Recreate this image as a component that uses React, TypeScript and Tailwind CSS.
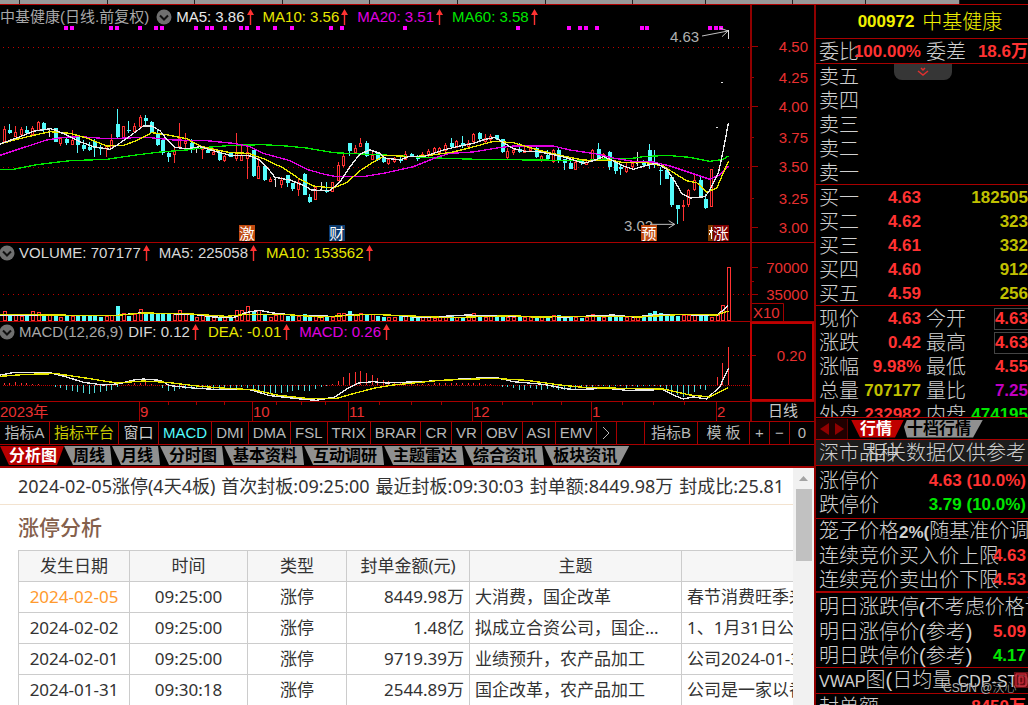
import React, { useState } from 'react';
import clsx from 'clsx';

type Point = [number, number];
// kind, high, body top, body bottom, low
type Candle = ['r' | 'c' | 'w', number, number, number, number];

interface Reading {
  label: string;
  color: string;
}

// Plot coordinates are thirds of a pixel
const candles: Candle[] = [
  ['r', 378, 387, 425, 425], ['c', 372, 390, 398, 402], ['r', 378, 398, 410, 410], ['r', 380, 387, 402, 407],
  ['c', 378, 390, 398, 405], ['r', 378, 385, 402, 405], ['r', 362, 368, 392, 392], ['c', 366, 368, 388, 400],
  ['w', 384, 388, 388, 412], ['c', 384, 384, 426, 426], ['r', 412, 414, 430, 438], ['c', 410, 418, 430, 436],
  ['r', 390, 420, 432, 436], ['c', 406, 408, 434, 458], ['c', 420, 434, 448, 454], ['c', 426, 442, 450, 454],
  ['c', 418, 424, 444, 472], ['c', 434, 440, 446, 464], ['r', 436, 440, 446, 470], ['r', 402, 420, 446, 446],
  ['c', 326, 372, 412, 416], ['r', 378, 380, 414, 416], ['c', 362, 390, 392, 400], ['r', 368, 380, 394, 396],
  ['r', 346, 352, 380, 382], ['c', 346, 354, 362, 374], ['c', 364, 366, 398, 398], ['c', 388, 400, 434, 438],
  ['c', 418, 420, 460, 464], ['c', 456, 458, 470, 486], ['r', 444, 454, 462, 490], ['r', 368, 414, 440, 444],
  ['r', 398, 424, 430, 444], ['c', 416, 430, 446, 460], ['w', 440, 444, 450, 460], ['r', 440, 444, 446, 476],
  ['c', 440, 450, 458, 460], ['r', 444, 458, 464, 466], ['c', 454, 458, 480, 484], ['r', 464, 468, 482, 486],
  ['c', 456, 460, 470, 472], ['r', 398, 456, 476, 482], ['r', 436, 466, 482, 484], ['r', 440, 456, 476, 536],
  ['c', 450, 450, 528, 530], ['r', 470, 500, 534, 536], ['c', 498, 498, 540, 544], ['r', 530, 538, 544, 546],
  ['w', 530, 536, 548, 560], ['r', 530, 542, 554, 564], ['c', 524, 526, 548, 560], ['c', 548, 550, 566, 572],
  ['r', 534, 548, 568, 588], ['c', 520, 522, 584, 584], ['c', 582, 592, 606, 610], ['r', 560, 562, 598, 600],
  ['w', 546, 566, 566, 574], ['c', 546, 572, 572, 578], ['r', 546, 548, 574, 576], ['r', 486, 496, 540, 542],
  ['r', 460, 468, 496, 500], ['c', 428, 430, 454, 468], ['r', 434, 444, 458, 462], ['r', 414, 430, 438, 442],
  ['c', 424, 428, 468, 472], ['r', 456, 466, 478, 480], ['c', 458, 460, 480, 484], ['c', 466, 470, 486, 490],
  ['r', 474, 478, 490, 494], ['r', 472, 476, 484, 488], ['c', 466, 476, 484, 488], ['r', 454, 462, 478, 480],
  ['c', 458, 462, 468, 472], ['c', 466, 470, 476, 484], ['r', 456, 462, 470, 472], ['r', 446, 454, 466, 470],
  ['r', 442, 446, 458, 462], ['r', 440, 444, 458, 464], ['r', 430, 436, 450, 456], ['c', 414, 428, 440, 446],
  ['r', 420, 424, 442, 444], ['c', 408, 430, 436, 444], ['r', 420, 430, 440, 446], ['r', 400, 404, 424, 428],
  ['c', 396, 398, 418, 422], ['r', 402, 416, 424, 432], ['r', 402, 408, 418, 424], ['c', 404, 404, 418, 420],
  ['c', 416, 418, 456, 460], ['r', 444, 454, 472, 478], ['r', 446, 450, 456, 466], ['c', 428, 446, 456, 460],
  ['r', 440, 450, 456, 460], ['r', 440, 444, 452, 456], ['c', 440, 444, 472, 474], ['r', 466, 470, 478, 486],
  ['c', 450, 464, 476, 480], ['r', 446, 450, 484, 488], ['c', 444, 450, 484, 488], ['c', 476, 478, 490, 510],
  ['c', 480, 490, 506, 508], ['r', 484, 486, 508, 510], ['c', 478, 480, 488, 494], ['r', 478, 486, 492, 494],
  ['r', 446, 450, 478, 482], ['c', 430, 446, 476, 482], ['r', 460, 464, 474, 478], ['c', 454, 456, 500, 510],
  ['c', 482, 484, 514, 522], ['c', 494, 500, 506, 524], ['r', 490, 502, 514, 518], ['r', 488, 490, 500, 504],
  ['w', 456, 490, 490, 498], ['c', 480, 488, 494, 500], ['c', 432, 450, 492, 508], ['c', 450, 490, 494, 504],
  ['c', 500, 510, 514, 554], ['c', 506, 510, 536, 538], ['c', 530, 532, 614, 622], ['c', 614, 616, 626, 672],
  ['r', 600, 616, 620, 662], ['r', 566, 572, 612, 620], ['r', 524, 540, 568, 572], ['c', 526, 540, 590, 592],
  ['c', 582, 596, 624, 626], ['r', 506, 508, 620, 622], ['w', 380, 380, 380, 380], ['w', 245, 245, 245, 245],
  ['w', 90, 90, 90, 118],
];

const volumes = [
  258, 272, 272, 274, 274, 258, 262, 272, 270, 266, 276, 272, 274, 274, 272, 272, 274, 276, 274, 270, 243, 266, 272,
  268, 252, 264, 262, 264, 264, 266, 268, 256, 264, 266, 276, 272, 276, 276, 276, 278, 280, 255, 257, 243, 262, 256,
  266, 278, 270, 268, 272, 274, 274, 266, 272, 274, 272, 276, 278, 264, 264, 258, 268, 266, 266, 268, 272, 276, 278,
  276, 274, 272, 276, 278, 276, 278, 280, 278, 276, 270, 276, 278, 274, 266, 272, 276, 274, 272, 272, 276, 278, 276,
  278, 276, 274, 278, 278, 270, 270, 274, 276, 276, 278, 278, 268, 274, 278, 270, 272, 276, 278, 276, 276, 276, 263,
  258, 264, 268, 270, 272, 270, 272, 270, 272, 272, 276, 272, 240, 128,
];

const macdBars = [
  8, 8, 9, 6, 6, 4, 5, 2, 1, -4, -8, -14, -17, -20, -24, -26, -22, -20, -17, -13, -6, 1, 5, 6, 8, 10, 5, 2, -8, -17,
  -18, -12, -10, -10, -12, -12, -12, -12, -14, -14, -14, -8, -6, -8, -14, -18, -20, -22, -24, -22, -20, -16, -14, -17,
  -18, -12, -6, -2, 3, 12, 24, 36, 40, 44, 38, 30, 22, 16, 12, 10, 8, 6, 5, 4, 5, 5, 6, 6, 6, 7, 7, 6, 6, 6, 6, 4, 3,
  2, -4, -6, -8, -13, -13, -8, -10, -13, -10, -9, -13, -13, -14, -12, -8, -8, -4, -3, -3, -4, -3, -3, -7, -3, -4, -2,
  -2, -2, -4, -12, -26, -30, -34, -28, -20, -12, -14, 0, 26, 68, 114,
];

const ma5: Point[] = [
  [0, 432], [50, 414], [100, 394], [150, 386], [165, 390], [200, 405], [240, 425], [280, 440], [330, 448], [350, 436],
  [390, 408], [430, 378], [455, 378], [480, 392], [500, 418], [525, 442], [560, 446], [600, 440], [640, 452],
  [690, 466], [745, 466], [775, 478], [800, 500], [825, 532], [870, 540], [910, 556], [935, 570], [990, 572],
  [1020, 545], [1050, 500], [1080, 462], [1110, 450], [1140, 460], [1155, 474], [1200, 480], [1225, 470], [1270, 470],
  [1330, 450], [1370, 440], [1420, 430], [1455, 418], [1485, 412], [1510, 428], [1540, 446], [1575, 454], [1610, 454],
  [1660, 464], [1695, 472], [1750, 490], [1780, 482], [1810, 470], [1835, 480], [1870, 498], [1900, 508], [1940, 496],
  [1970, 490], [2000, 508], [2025, 545], [2045, 580], [2070, 594], [2115, 590], [2130, 570], [2155, 520], [2170, 450],
  [2185, 370],
];
const ma10: Point[] = [
  [0, 432], [50, 418], [110, 404], [150, 395], [210, 400], [260, 414], [320, 438], [370, 436], [410, 422], [455, 398],
  [500, 404], [560, 416], [600, 438], [640, 448], [690, 458], [745, 460], [790, 476], [850, 504], [900, 538],
  [940, 558], [1000, 564], [1040, 548], [1080, 512], [1120, 486], [1155, 466], [1240, 470], [1290, 466], [1360, 456],
  [1430, 438], [1480, 424], [1540, 428], [1580, 440], [1630, 454], [1690, 468], [1750, 480], [1790, 482], [1830, 480],
  [1870, 488], [1940, 488], [1990, 498], [2030, 524], [2060, 542], [2090, 548], [2120, 576], [2150, 565], [2185, 484],
];
const ma20: Point[] = [
  [0, 466], [60, 446], [140, 420], [190, 412], [240, 410], [320, 416], [440, 412], [520, 420], [620, 422], [700, 430],
  [750, 440], [790, 460], [870, 482], [920, 508], [970, 522], [1010, 530], [1090, 530], [1160, 518], [1240, 500],
  [1310, 472], [1350, 460], [1420, 456], [1490, 444], [1540, 438], [1660, 438], [1710, 450], [1790, 462], [1840, 474],
  [1900, 484], [1960, 486], [2010, 498], [2070, 518], [2130, 538], [2160, 524], [2185, 498],
];
const ma60: Point[] = [
  [0, 508], [40, 508], [110, 494], [210, 482], [320, 478], [400, 466], [480, 456], [560, 450], [620, 442], [700, 436],
  [790, 434], [860, 438], [920, 444], [1000, 458], [1170, 466], [1310, 474], [1430, 478], [1610, 480], [1750, 482],
  [1830, 476], [1890, 476], [1930, 470], [2000, 466], [2070, 472], [2130, 484], [2170, 478], [2185, 468],
];
const volMa5: Point[] = [
  [0, 270], [150, 272], [340, 272], [420, 264], [500, 266], [580, 268], [640, 276], [700, 278], [740, 262], [780, 256],
  [820, 264], [900, 272], [1010, 274], [1060, 268], [1120, 268], [1200, 272], [1260, 278], [1400, 270], [1460, 272],
  [1700, 276], [1840, 270], [1900, 276], [1980, 268], [2100, 270], [2150, 272], [2185, 242],
];
const volMa10: Point[] = [
  [0, 268], [150, 270], [340, 272], [430, 264], [560, 266], [680, 274], [740, 268], [850, 268], [960, 276],
  [1110, 268], [1260, 274], [1350, 278], [1540, 272], [1600, 276], [1840, 274], [1920, 276], [2050, 268], [2150, 270],
  [2185, 258],
];
const dif: Point[] = [
  [0, 450], [40, 443], [150, 443], [200, 456], [250, 472], [310, 480], [360, 476], [400, 465], [430, 462], [480, 466],
  [510, 482], [590, 490], [660, 494], [750, 494], [810, 512], [900, 522], [950, 526], [1005, 516], [1040, 492],
  [1075, 474], [1120, 470], [1160, 474], [1300, 468], [1410, 460], [1490, 458], [1540, 470], [1630, 478], [1690, 490],
  [1720, 494], [1820, 490], [1880, 496], [1990, 494], [2020, 510], [2050, 522], [2080, 516], [2120, 522], [2160, 484],
  [2185, 430],
];
const dea: Point[] = [
  [0, 454], [80, 448], [170, 446], [250, 458], [350, 474], [430, 468], [500, 472], [600, 484], [680, 490], [760, 494],
  [830, 510], [920, 520], [1010, 520], [1060, 506], [1120, 490], [1180, 480], [1320, 466], [1480, 460], [1580, 466],
  [1680, 480], [1760, 488], [1990, 492], [2070, 510], [2130, 516], [2185, 488],
];

const eventMarks = [
  -6, 197, 216, 333, 351, 419, 467, 486, 587, 621, 636, 674, 723, 741, 775, 824, 876, 993, 1026, 1214, 1555, 1706, 1739,
  1758, 1792, 1927, 1942, 2130, 2148, 2163,
];

const badges = [
  { x: 717, text: '激', fill: '#c04a10' },
  { x: 987, text: '财', fill: '#0b3b6e' },
  { x: 1923, text: '预', fill: '#c04a10' },
  { x: 2139, text: '涨', fill: '#800000' },
];

const months = [
  { x: 139, label: '9' },
  { x: 252, label: '10' },
  { x: 348, label: '11' },
  { x: 472, label: '12' },
  { x: 591, label: '1' },
  { x: 716, label: '2' },
];
const minorTicks = [168, 196, 224, 276, 301, 325, 379, 411, 441, 502, 532, 561, 622, 653, 684];

const indicators = ['MACD', 'DMI', 'DMA', 'FSL', 'TRIX', 'BRAR', 'CR', 'VR', 'OBV', 'ASI', 'EMV'];
const infoTabs = ['分析图', '周线', '月线', '分时图', '基本资料', '互动调研', '主题雷达', '综合资讯', '板块资讯'];
const stripCells = [
  'w-5', 'w-[88px]', 'w-[87px]', 'w-[88px]', 'w-[87px]', 'w-[88px]', 'w-[88px]', 'w-[87px]', 'w-[73px]', 'w-[87px]',
  'w-[73px]', 'w-[94px]',
];

const limitUps = [
  { date: '2024-02-05', time: '09:25:00', type: '涨停', amount: '8449.98万', theme: '大消费，国企改革', note: '春节消费旺季来临，公司' },
  { date: '2024-02-02', time: '09:25:00', type: '涨停', amount: '1.48亿', theme: '拟成立合资公司，国企...', note: '1、1月31日公告，公司' },
  { date: '2024-02-01', time: '09:25:00', type: '涨停', amount: '9719.39万', theme: '业绩预升，农产品加工', note: '公司2024-01-30公告' },
  { date: '2024-01-31', time: '09:30:18', type: '涨停', amount: '2544.89万', theme: '国企改革，农产品加工', note: '公司是一家以番茄' },
];

const asks = ['卖五', '卖四', '卖三', '卖二', '卖一'];
const bids = [
  ['买一', '4.63', '182505'],
  ['买二', '4.62', '323'],
  ['买三', '4.61', '332'],
  ['买四', '4.60', '912'],
  ['买五', '4.59', '256'],
];
const RED = 'text-[#ff3232]';
const GREEN = 'text-[#00e600]';
const YELLOW = 'text-[#c0c000]';
const stats = [
  { a: '现价', av: '4.63', ac: RED, b: '今开', bv: '4.63', bc: RED, boxed: true },
  { a: '涨跌', av: '0.42', ac: RED, b: '最高', bv: '4.63', bc: RED, boxed: true },
  { a: '涨幅', av: '9.98%', ac: RED, b: '最低', bv: '4.55', bc: RED },
  { a: '总量', av: '707177', ac: YELLOW, b: '量比', bv: '7.25', bc: 'text-[#c000c0]' },
  { a: '外盘', av: '232982', ac: RED, b: '内盘', bv: '474195', bc: GREEN },
];

// Snap to the pixel centre so the wicks stay sharp
const barX = (i: number) => Math.floor((13 + 16.97 * i) / 3) * 3 + 1.5;
const toPoints = (points: Point[]) => points.map((p) => p.join(',')).join(' ');

function Line({ points, color }: { points: Point[]; color: string }) {
  return <polyline points={toPoints(points)} fill="none" stroke={color} strokeWidth={4} />;
}

function Dotted({ y, dash = '3 12' }: { y: number; dash?: string }) {
  return <line x1={9} x2={2250} y1={y} y2={y} stroke="#c00000" strokeWidth={3} strokeDasharray={dash} />;
}

function ToggleIcon({ label }: { label: string }) {
  return (
    <button aria-label={label} className="-ml-px mr-1 shrink-0">
      <svg width="16" height="16" viewBox="0 0 16 16">
        <circle cx="8" cy="8" r="7.5" fill="#707070" />
        <path d="M4 6.5l4 4 4-4" fill="none" stroke="#111" strokeWidth="2" />
      </svg>
    </button>
  );
}

function UpArrow() {
  return (
    <svg width="7" height="16" viewBox="0 0 7 16" className="shrink-0">
      <path d="M3.5 0L7 6H4.2V16H2.8V6H0z" fill="#ff3232" />
    </svg>
  );
}

function Readings({ items }: { items: Reading[] }) {
  return (
    <>
      {items.map((item) => (
        <span key={item.label} className={clsx('mr-[9px] flex items-center gap-[2px]', item.color)}>
          {item.label}
          <UpArrow />
        </span>
      ))}
    </>
  );
}

function PriceChart() {
  return (
    <svg viewBox="0 75 2250 651" preserveAspectRatio="none" className="block h-[217px] w-full" shapeRendering="crispEdges">
      <Dotted y={141} />
      <Dotted y={321} />
      <Dotted y={501} />
      {eventMarks.map((x) => (
        <rect key={x} x={x - 6} y={78} width={12} height={12} fill="#ff00ff" />
      ))}
      {candles.map(([kind, high, top, bottom, low], i) => {
        const x = barX(i);
        const height = Math.max(bottom - top, 3);
        if (kind === 'r') {
          return (
            <g key={i} stroke="#ff3232" strokeWidth={3}>
              <line x1={x} x2={x} y1={high} y2={low} />
              <rect x={x - 3} y={top} width={6} height={height} fill="#000" />
            </g>
          );
        }
        const color = kind === 'c' ? '#54fcfc' : '#e0e0e0';
        return (
          <g key={i}>
            <line x1={x} x2={x} y1={high} y2={low} stroke={color} strokeWidth={3} />
            <rect x={x - 4.5} y={top} width={kind === 'c' ? 12 : 6} height={kind === 'c' ? height : 3} fill={color} />
          </g>
        );
      })}
      <Line points={ma60} color="#00e600" />
      <Line points={ma20} color="#e000e0" />
      <Line points={ma10} color="#e6e600" />
      <Line points={ma5} color="#e8e8e8" />
      <g fill="#b0b0b0" fontSize={45}>
        <text x={2010} y={126}>4.63</text>
        <text x={1872} y={693}>3.02</text>
      </g>
      <g fill="none" stroke="#c0c0c0" strokeWidth={3} shapeRendering="auto">
        <path d="M2106 108L2184 93M2160 84L2184 93L2166 110" />
        <path d="M1950 673H2024M2006 662L2024 673L2006 684" />
      </g>
      <rect x={2124} y={675} width={30} height={48} fill="#7a3a00" />
      <path d="M2133 681V717M2127 690H2139M2133 693L2127 705" fill="none" stroke="#fff" strokeWidth={3} />
      {badges.map((badge) => (
        <g key={badge.text}>
          <rect x={badge.x} y={675} width={48} height={48} rx={4} fill={badge.fill} />
          <text x={badge.x + 1} y={716} fontSize={46} fill="#fff">{badge.text}</text>
        </g>
      ))}
    </svg>
  );
}

function VolumeChart() {
  return (
    <svg viewBox="0 114 2250 174" preserveAspectRatio="none" className="block h-[58px] w-full" shapeRendering="crispEdges">
      <Dotted y={208} />
      {volumes.map((top, i) => {
        const x = barX(i);
        const falling = candles[i][0] === 'c';
        return falling ? (
          <rect key={i} x={x - 4.5} y={top} width={12} height={288 - top} fill="#54fcfc" />
        ) : (
          <rect key={i} x={x - 3} y={top} width={9} height={286 - top} fill="#000" stroke="#ff3232" strokeWidth={3} />
        );
      })}
      <Line points={volMa5} color="#e8e8e8" />
      <Line points={volMa10} color="#e6e600" />
    </svg>
  );
}

function MacdChart() {
  return (
    <svg viewBox="0 351 2250 177" preserveAspectRatio="none" className="block h-[59px] w-full" shapeRendering="crispEdges">
      <Dotted y={391} />
      <Dotted y={481} dash="3 3" />
      {macdBars.map((value, i) => (
        <line
          key={i}
          x1={barX(i)}
          x2={barX(i)}
          y1={481}
          y2={481 - value}
          stroke={value > 0 ? '#ff3232' : '#54d8d8'}
          strokeWidth={3}
        />
      ))}
      <Line points={dif} color="#e8e8e8" />
      <Line points={dea} color="#e6e600" />
    </svg>
  );
}

function PriceAxis() {
  const labels = [
    ['4.50', 47], ['4.25', 78], ['4.00', 107], ['3.75', 138], ['3.50', 167], ['3.25', 199], ['3.00', 228],
  ] as [string, number][];
  return (
    <svg viewBox="752 5 62 237" className="h-[237px] w-[62px]" fontSize={15} fill="#e83030">
      {labels.map(([label, y], i) => (
        <g key={label}>
          <rect x={752} y={y - 1} width={i % 2 ? 2 : 6} height={1} fill="#a00000" />
          <text x={808} y={y + 5} textAnchor="end">{label}</text>
        </g>
      ))}
    </svg>
  );
}

function VolumeAxis() {
  return (
    <svg viewBox="752 243 62 78" className="h-[78px] w-[62px]" fontSize={15} fill="#e83030">
      <rect x={752} y={267} width={6} height={1} fill="#a00000" />
      <rect x={752} y={281} width={2} height={1} fill="#a00000" />
      <rect x={752} y={294} width={6} height={1} fill="#a00000" />
      <text x={808} y={273} textAnchor="end">70000</text>
      <text x={808} y={300} textAnchor="end">35000</text>
      <path d="M752 303.5H783.5V321" fill="none" stroke="#a00000" />
      <text x={753} y={318}>X10</text>
    </svg>
  );
}

function DateAxis() {
  return (
    <svg viewBox="0 402 750 19" preserveAspectRatio="none" className="h-[19px] w-full" fontSize={15} fill="#e83030">
      <text x={0} y={417}>2023年</text>
      {minorTicks.map((x) => (
        <rect key={x} x={x} y={402} width={1} height={3} fill="#a00000" />
      ))}
      {months.map((month) => (
        <g key={month.label}>
          <rect x={month.x} y={402} width={1} height={19} fill="#a00000" />
          <text x={month.x + 1} y={417}>{month.label}</text>
        </g>
      ))}
    </svg>
  );
}

interface PaneProps {
  children: React.ReactNode;
  axis: React.ReactNode;
  className?: string;
  axisClassName?: string;
}

function Pane({ children, axis, className, axisClassName }: PaneProps) {
  return (
    <section className={clsx('flex shrink-0 border-b border-[#a80000]', className)}>
      <div className="min-w-0 flex-1">{children}</div>
      <div className={clsx('w-16 shrink-0 border-l-2 border-[#900000]', axisClassName)}>{axis}</div>
    </section>
  );
}

const toolButton = 'h-full border-r border-[#a80000] px-1 whitespace-nowrap';

function IndicatorBar({ active, onSelect }: { active: string; onSelect: (name: string) => void }) {
  return (
    <nav className="flex h-[23px] shrink-0 items-center border-b border-[#a80000] text-[15px] text-[#b8b8b8]">
      <button className={clsx(toolButton, 'w-[50px]')}>指标A</button>
      <button className={clsx(toolButton, 'w-[69px] text-[#c8c800]')}>指标平台</button>
      <button className={clsx(toolButton, 'w-10 text-[#d0d0d0]')}>窗口</button>
      {indicators.map((name) => (
        <button key={name} onClick={() => onSelect(name)} className={clsx(toolButton, name === active && 'text-[#54fcfc]')}>
          {name}
        </button>
      ))}
      <button aria-label="更多指标" className={clsx(toolButton, 'w-5')}>
        <svg width="10" height="14" viewBox="0 0 10 14">
          <path d="M2 1l6 6-6 6" fill="none" stroke="#b8b8b8" />
        </svg>
      </button>
      <span className="h-full flex-1 border-r border-[#a80000]" />
      <button className={clsx(toolButton, 'w-[53px]')}>指标B</button>
      <button className={clsx(toolButton, 'w-[52px]')}>模 板</button>
      <button className={clsx(toolButton, 'w-5')}>+</button>
      <button className={clsx(toolButton, 'w-5')}>−</button>
      <button className="h-full w-6">0</button>
    </nav>
  );
}

function InfoTabs({ active, onSelect }: { active: string; onSelect: (name: string) => void }) {
  return (
    <nav className="flex h-[23px] shrink-0 items-center border-b-2 border-[#a00000] text-base font-bold">
      {infoTabs.map((name, i) => (
        <button
          key={name}
          onClick={() => onSelect(name)}
          className={clsx(
            'h-[19px] pl-[9px] leading-[19px] whitespace-nowrap',
            name === active ? 'bg-[#b80000] text-white' : 'bg-[#909090] text-black',
            i === 0 && 'pr-[7px] [clip-path:polygon(0_0,100%_0,calc(100%-7px)_100%,9px_100%)]',
            i === infoTabs.length - 1 && 'pr-3 [clip-path:polygon(0_0,100%_0,calc(100%-10px)_100%,9px_100%)]',
            i > 0 && i < infoTabs.length - 1 && 'pr-[7px] [clip-path:polygon(0_0,calc(100%-2px)_0,100%_100%,9px_100%)]',
          )}
        >
          {name}
        </button>
      ))}
    </nav>
  );
}

function LimitUpPanel() {
  const cell = 'h-[31px] overflow-hidden border border-[#ccc] px-[5px] font-normal whitespace-nowrap';
  return (
    <section className="flex min-h-0 flex-1 bg-white font-['Noto_Sans','Noto_Sans_CJK_SC',sans-serif] text-[17px] text-[#333]">
      <div className="min-w-0 flex-1 overflow-hidden">
        <p className="flex h-[37px] items-center gap-[6px] border-b border-[#f3e3d0] pl-[18px] text-lg whitespace-nowrap">
          <span>2024-02-05涨停(4天4板)</span>
          <span>首次封板:09:25:00</span>
          <span>最近封板:09:30:03</span>
          <span>封单额:8449.98万</span>
          <span>封成比:25.81</span>
        </p>
        <h2 className="flex h-[45px] items-center pl-[18px] text-[21px] font-medium text-[#84604c]">涨停分析</h2>
        <table className="ml-[18px] w-[1063px] table-fixed border-collapse text-center">
          <thead>
            <tr className="bg-[#f6f6f6]">
              <th className={clsx(cell, 'w-[111px]')}>发生日期</th>
              <th className={clsx(cell, 'w-[118px]')}>时间</th>
              <th className={clsx(cell, 'w-[99px]')}>类型</th>
              <th className={clsx(cell, 'w-[123px]')}>封单金额(元)</th>
              <th className={clsx(cell, 'w-[212px]')}>主题</th>
              <th className={clsx(cell, 'w-[400px]')} aria-label="原因" />
            </tr>
          </thead>
          <tbody>
            {limitUps.map((row, i) => (
              <tr key={row.date}>
                <td className={clsx(cell, i === 0 && 'text-[#ff9a2e]')}>{row.date}</td>
                <td className={cell}>{row.time}</td>
                <td className={cell}>{row.type}</td>
                <td className={clsx(cell, 'text-right')}>{row.amount}</td>
                <td className={clsx(cell, 'text-left')}>{row.theme}</td>
                <td className={clsx(cell, 'text-left')}>{row.note}</td>
              </tr>
            ))}
          </tbody>
        </table>
      </div>
      <div className="flex w-[21px] shrink-0 flex-col items-center bg-[#f1f1f1] pt-2">
        <svg width="9" height="5" viewBox="0 0 9 5">
          <path d="M0 5L4.500 0L9 5z" fill="#a3a3a3" />
        </svg>
        <div className="mt-2 h-[72px] w-4 bg-[#c1c1c1]" />
      </div>
    </section>
  );
}

const num = 'font-bold text-[17px]';

// The value lies over the label when the column is too narrow for both
function QuoteCell({ label, value, color, boxed }: { label: string; value?: string; color?: string; boxed?: boolean }) {
  return (
    <div className="grid h-6 items-center overflow-hidden pt-px">
      <span className="col-start-1 row-start-1 whitespace-nowrap">{label}</span>
      {value && (
        <span
          className={clsx(
            'col-start-1 row-start-1 justify-self-end whitespace-nowrap',
            num,
            color,
            boxed && 'border border-r-0 border-[#444] leading-5',
          )}
        >
          {value}
        </span>
      )}
    </div>
  );
}

function QuotePanel() {
  const group = 'border-b border-[#a80000] pl-[3px]';
  return (
    <aside className="w-[214px] shrink-0 overflow-hidden border-l-2 border-[#900000] text-xl leading-6 font-light text-[#d0d0d0]">
      <h1 className="flex h-[34px] items-center justify-center gap-2 border-b border-[#a80000] pl-4 text-[#f0f000]">
        <span className={num}>000972</span>
        <span className="font-light">中基健康</span>
      </h1>
      <div className={clsx(group, 'grid h-[25px] grid-cols-2 gap-x-[5px]')}>
        <QuoteCell label="委比" value="100.00%" color={RED} />
        <QuoteCell label="委差" value="18.6万" color={RED} />
      </div>
      <div className={clsx(group, 'relative')}>
        <button
          aria-label="展开"
          className="absolute top-0 left-[78px] flex h-4 w-[58px] items-center justify-center rounded-b-lg bg-[#363636]"
        >
          <svg width="12" height="10" viewBox="0 0 12 10">
            <path d="M1 4l5 4 5-4M4 1l2 2 2-2" fill="none" stroke="#e03030" strokeWidth="1.500" />
          </svg>
        </button>
        {asks.map((label) => (
          <QuoteCell key={label} label={label} />
        ))}
      </div>
      <div className={group}>
        {bids.map(([label, price, volume]) => (
          <div key={label} className="grid grid-cols-2 gap-x-[5px]">
            <QuoteCell label={label} value={price} color={RED} />
            <QuoteCell label="" value={volume} color={YELLOW} />
          </div>
        ))}
      </div>
      <div className={clsx(group, 'h-[112px] overflow-hidden')}>
        {stats.map((row) => (
          <div key={row.a} className="grid grid-cols-2 gap-x-[5px]">
            <QuoteCell label={row.a} value={row.av} color={row.ac} />
            <QuoteCell label={row.b} value={row.bv} color={row.bc} boxed={row.boxed} />
          </div>
        ))}
      </div>
      <nav className="flex h-[22px] items-center border-b border-[#a80000] text-base font-bold">
        <button aria-label="上一页" className="flex h-5 w-4 items-center justify-center bg-[#200000]">
          <svg width="9" height="12" viewBox="0 0 9 12"><path d="M9 0L0 6L9 12z" fill="#900000" /></svg>
        </button>
        <button aria-label="下一页" className="mr-[3px] flex h-5 w-4 items-center justify-center border-r border-[#600000] bg-[#200000]">
          <svg width="9" height="12" viewBox="0 0 9 12"><path d="M0 0L9 6L0 12z" fill="#900000" /></svg>
        </button>
        <button className="h-[18px] bg-[#c00000] pr-3 pl-[9px] leading-[18px] text-white [clip-path:polygon(0_0,100%_0,calc(100%-9px)_100%,9px_100%)]">
          行情
        </button>
        <button className="h-[18px] bg-[#909090] pr-3 pl-[3px] leading-[18px] text-black [clip-path:polygon(3px_0,100%_0,calc(100%-10px)_100%,3px_100%,0_40%)]">
          十档行情
        </button>
      </nav>
      <div className={clsx(group, 'grid h-[26px] items-center bg-[#1c1c1c] pr-[2px]')}>
        <span className="col-start-1 row-start-1">深市品种</span>
        <span className="col-start-1 row-start-1 justify-self-end">相关数据仅供参考</span>
      </div>
      <div className={clsx(group, 'py-[2px] pr-[2px]')}>
        <QuoteCell label="涨停价" value="4.63 (10.0%)" color={RED} />
        <QuoteCell label="跌停价" value="3.79 (10.0%)" color={GREEN} />
      </div>
      <div className={clsx(group, 'border-b-2 pr-[2px]')}>
        <p className="h-6 whitespace-nowrap">
          笼子价格<span className={num}>2%(</span>随基准价调整)
        </p>
        <QuoteCell label="连续竞价买入价上限" value="4.63" color={RED} />
        <QuoteCell label="连续竞价卖出价下限" value="4.53" color={RED} />
      </div>
      <div className={clsx(group, 'pt-[2px] pr-[2px]')}>
        <p className="h-6 whitespace-nowrap">
          明日涨跌停<span className={num}>(</span>不考虑价格计算)
        </p>
        <QuoteCell label="明日涨停价(参考)" value="5.09" color={RED} />
        <QuoteCell label="明日跌停价(参考)" value="4.17" color={GREEN} />
      </div>
      <div className={clsx(group, 'relative h-[26px] whitespace-nowrap')}>
        <span className="text-base font-normal">VWAP</span>图(日均量 <span className="text-base font-normal">CDP-STD</span>
        <button aria-label="设置" className="absolute top-1 right-0 h-4 w-[14px] bg-[#801018]/80">
          <svg width="14" height="16" viewBox="0 0 14 16">
            <path d="M2 2h10v12H2zM5 5h4v6H5z" fill="none" stroke="#e03040" />
          </svg>
        </button>
        <small className="absolute top-3 left-[127px] text-xs text-[#b0b0b0]">CSDN @沃心</small>
      </div>
      <div className={clsx(group, 'pr-[2px]')}>
        <QuoteCell label="封单额" value="8450万" color={RED} />
      </div>
    </aside>
  );
}

export default function App() {
  const [indicator, setIndicator] = useState('MACD');
  const [tab, setTab] = useState('分析图');
  const header = 'flex h-5 items-center text-[15px] leading-4 whitespace-nowrap';

  return (
    <div className="flex h-screen flex-col overflow-hidden bg-black font-['Liberation_Sans','Noto_Sans_CJK_SC',sans-serif]">
      <div className="flex h-1 shrink-0">
        {stripCells.map((width, i) => (
          <span key={i} className={clsx('border-r border-[#222] bg-[#989898]', width)} />
        ))}
      </div>
      <div className="flex min-h-0 flex-1 border-t border-[#b00000]">
        <main className="flex min-w-0 flex-1 flex-col">
          <Pane axis={<PriceAxis />} className="h-[238px]">
            <header className={clsx(header, 'pt-1')}>
              <span className="mr-2 text-[#a8a8a8]">中基健康(日线.前复权)</span>
              <ToggleIcon label="主图指标" />
              <Readings
                items={[
                  { label: 'MA5: 3.86', color: 'text-[#e8e8e8]' },
                  { label: 'MA10: 3.56', color: 'text-[#e6e600]' },
                  { label: 'MA20: 3.51', color: 'text-[#e000e0]' },
                  { label: 'MA60: 3.58', color: 'text-[#00e600]' },
                ]}
              />
            </header>
            <PriceChart />
          </Pane>
          <Pane axis={<VolumeAxis />} className="h-[79px]">
            <header className={header}>
              <ToggleIcon label="成交量指标" />
              <Readings
                items={[
                  { label: 'VOLUME: 707177', color: 'text-[#d8d8d8]' },
                  { label: 'MA5: 225058', color: 'text-[#d8d8d8]' },
                  { label: 'MA10: 153562', color: 'text-[#e6e600]' },
                ]}
              />
            </header>
            <VolumeChart />
          </Pane>
          <Pane
            axis={
              <svg viewBox="754 324 58 76" className="h-[76px] w-[58px]" fontSize={15} fill="#e83030">
                <rect x={754} y={355} width={4} height={1} fill="#a00000" />
                <text x={808} y={361} textAnchor="end">0.20</text>
              </svg>
            }
            className="h-20"
            axisClassName="border-2 border-[#c00000]"
          >
            <header className={header}>
              <ToggleIcon label="MACD 指标" />
              <span className="mr-[5px] text-[#a8a8a8]">MACD(12,26,9)</span>
              <Readings
                items={[
                  { label: 'DIF: 0.12', color: 'text-[#d8d8d8]' },
                  { label: 'DEA: -0.01', color: 'text-[#e6e600]' },
                  { label: 'MACD: 0.26', color: 'text-[#e000e0]' },
                ]}
              />
            </header>
            <MacdChart />
          </Pane>
          <Pane
            axis={<span className="flex h-full items-center justify-center text-[15px] text-[#c8c8c8]">日线</span>}
            className="h-5"
          >
            <DateAxis />
          </Pane>
          <IndicatorBar active={indicator} onSelect={setIndicator} />
          <InfoTabs active={tab} onSelect={setTab} />
          <LimitUpPanel />
        </main>
        <QuotePanel />
      </div>
    </div>
  );
}
